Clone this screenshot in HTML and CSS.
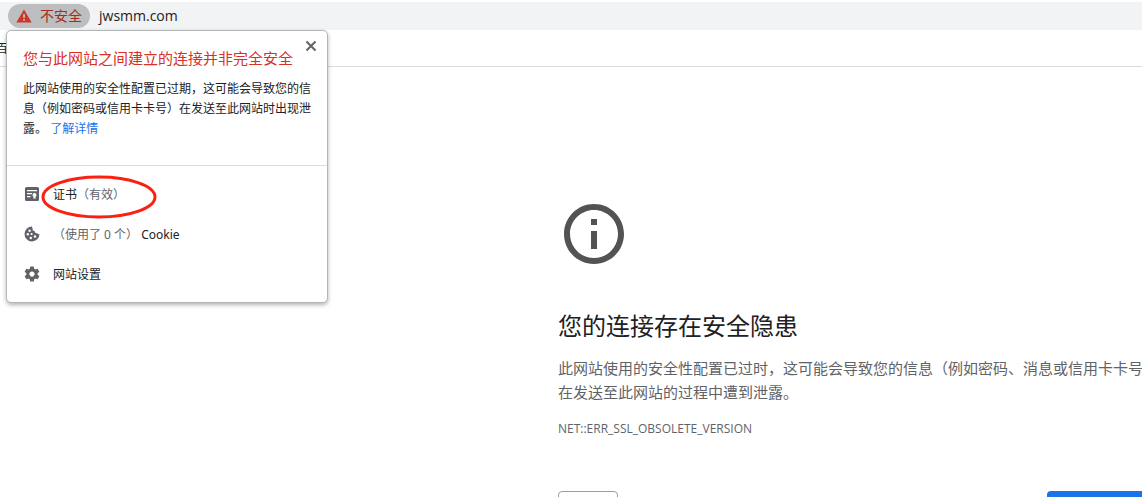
FILE: index.html
```html
<!DOCTYPE html>
<html lang="zh-CN">
<head>
    <meta charset="UTF-8">
    <meta name="viewport" content="width=device-width, initial-scale=1.0">
    <title>您的连接存在安全隐患</title>
    <link rel="stylesheet" href="styles.css">
</head>
<body>
    <header class="browser">
        <div class="address-bar">
            <button type="button" class="chip">
                <svg width="16" height="14" viewBox="0 0 16 14">
                    <path fill="#d0352b" d="M8 0.5 15.7 13.5H0.3z"/>
                    <path fill="#bdbebf" d="M7.2 5h1.7v4H7.2zM7.2 10h1.7v1.7H7.2z"/>
                </svg>
                <span>不安全</span>
            </button>
            <span class="url">jwsmm.com</span>
        </div>
        <nav class="bookmarks"><span class="bookmark">百</span></nav>
    </header>

    <section class="popup">
        <button type="button" class="close" aria-label="关闭">
            <svg width="12" height="12" viewBox="0 0 12 12">
                <path d="M1.5 1.5l9 9M10.5 1.5l-9 9" stroke="#5f6368" stroke-width="2"/>
            </svg>
        </button>
        <div class="popup-info">
            <h2>您与此网站之间建立的连接并非完全安全</h2>
            <p>此网站使用的安全性配置已过期，这可能会导致您的信息（例如密码或信用卡卡号）在发送至此网站时出现泄露。 <a href="#">了解详情</a></p>
        </div>
        <div class="popup-menu">
            <button type="button" class="item">
                <svg width="16" height="16" viewBox="0 0 16 16">
                    <path fill="#5f6368" d="M2.5 1h11A1.5 1.5 0 0 1 15 2.5v11a1.5 1.5 0 0 1-1.5 1.5h-11A1.5 1.5 0 0 1 1 13.5v-11A1.5 1.5 0 0 1 2.5 1z"/>
                    <path fill="#fff" d="M3 4h10v1.3H3zM3 7h5v1.3H3zM3 10h3.5v1.3H3z"/>
                    <circle cx="10.5" cy="9" r="2" fill="#fff"/>
                    <path fill="#fff" d="M9.5 9.5h2V13l-1-.8-1 .8z"/>
                </svg>
                <span>证书<span class="muted">（有效）</span></span>
            </button>
            <button type="button" class="item">
                <svg width="16" height="16" viewBox="0 0 16 16">
                    <path fill="#5f6368" d="M8 .5a7.5 7.5 0 1 0 7.5 7.6c-.8.3-1.9 0-2.3-.9-1.5.3-2.7-.7-2.5-2.2C9 5 8 3.5 8.7 2.2 8 1.8 7.8 1.2 8 .5z"/>
                    <g fill="#fff">
                        <circle cx="5.6" cy="4.7" r="1.2"/>
                        <circle cx="3.8" cy="8.3" r="1.2"/>
                        <circle cx="7.6" cy="8" r="1.1"/>
                        <circle cx="6.8" cy="12" r="1.2"/>
                        <circle cx="11" cy="10.5" r="1.2"/>
                    </g>
                </svg>
                <span><span class="muted">（使用了 0 个）</span> Cookie</span>
            </button>
            <button type="button" class="item">
                <svg width="18" height="18" viewBox="0 0 24 24">
                    <path fill="#5f6368" d="M19.43 12.98c.04-.32.07-.64.07-.98s-.03-.66-.07-.98l2.11-1.65c.19-.15.24-.42.12-.64l-2-3.46c-.12-.22-.39-.3-.61-.22l-2.49 1c-.52-.4-1.08-.73-1.69-.98l-.38-2.65C14.46 2.18 14.25 2 14 2h-4c-.25 0-.46.18-.49.42l-.38 2.65c-.61.25-1.17.59-1.69.98l-2.49-1c-.23-.09-.49 0-.61.22l-2 3.46c-.13.22-.07.49.12.64l2.11 1.65c-.04.32-.07.65-.07.98s.03.66.07.98l-2.11 1.65c-.19.15-.24.42-.12.64l2 3.46c.12.22.39.3.61.22l2.49-1c.52.4 1.08.73 1.69.98l.38 2.65c.03.24.24.42.49.42h4c.25 0 .46-.18.49-.42l.38-2.65c.61-.25 1.17-.59 1.69-.98l2.49 1c.23.09.49 0 .61-.22l2-3.46c.12-.22.07-.49-.12-.64l-2.11-1.65zM12 15.5c-1.93 0-3.5-1.57-3.5-3.5s1.57-3.5 3.5-3.5 3.5 1.57 3.5 3.5-1.57 3.5-3.5 3.5z"/>
                </svg>
                <span>网站设置</span>
            </button>
            <!-- red ring around the certificate row -->
            <svg class="ring" width="116" height="44" viewBox="0 0 116 44">
                <ellipse cx="58" cy="22" rx="56" ry="20" fill="none" stroke="#fb2010" stroke-width="3"/>
            </svg>
        </div>
    </section>

    <main class="page">
        <div class="content">
            <svg class="info-icon" width="72" height="72" viewBox="0 0 24 24">
                <path fill="#535353" d="M11 7h2v2h-2zm0 4h2v6h-2zm1-9C6.48 2 2 6.48 2 12s4.48 10 10 10 10-4.48 10-10S17.52 2 12 2zm0 18c-4.41 0-8-3.59-8-8s3.59-8 8-8 8 3.59 8 8-3.59 8-8 8z"/>
            </svg>
            <h1>您的连接存在安全隐患</h1>
            <p>此网站使用的安全性配置已过时，这可能会导致您的信息（例如密码、消息或信用卡卡号）在发送至此网站的过程中遭到泄露。</p>
            <div class="error-code">NET::ERR_SSL_OBSOLETE_VERSION</div>
            <div class="actions">
                <button type="button" class="details" aria-label="高级"></button>
                <button type="button" class="primary" aria-label="返回安全连接"></button>
            </div>
        </div>
    </main>
</body>
</html>
```

FILE: styles.css
```css
* {
    box-sizing: border-box;
}

body {
    margin: 0;
    height: 100vh;
    overflow: hidden;
    background-color: #fff;
    color: #202124;
    font-family: "Noto Sans", "Noto Sans CJK SC", sans-serif;
    font-size: 12px;
}

button {
    margin: 0;
    padding: 0;
    border: none;
    background: none;
    color: inherit;
    font: inherit;
    cursor: pointer;
}

h1,
h2,
p {
    margin: 0;
    font-weight: normal;
}

/* browser bars */
.browser {
    padding-top: 2px;
    border-bottom: 1px solid #dadce0;
}

.address-bar {
    display: flex;
    align-items: center;
    gap: 9px;
    height: 28px;
    padding-left: 8px;
    background-color: #f1f3f4;
}

.chip {
    display: flex;
    align-items: center;
    gap: 8px;
    height: 24px;
    padding: 0 8px;
    border-radius: 12px;
    background-color: #bdbebf;
    color: #a52a22;
    font-size: 14px;
}

.chip span,
.url {
    padding-bottom: 2px;
}

.url {
    font-family: "Open Sans", sans-serif;
    font-size: 14px;
}

.bookmarks {
    display: flex;
    align-items: center;
    height: 36px;
}

.bookmark {
    margin-left: -4px;
}

/* site info popup */
.popup {
    position: absolute;
    top: 30px;
    left: 6px;
    width: 322px;
    border: 1px solid #b4b6b8;
    border-radius: 5px;
    background-color: #fff;
    box-shadow: 0 2px 4px rgba(0, 0, 0, 0.3);
}

.close {
    position: absolute;
    top: 9px;
    right: 10px;
    width: 12px;
    height: 12px;
}

.close svg {
    display: block;
}

.popup-info {
    padding: 16px 14px 26px 16px;
    border-bottom: 1px solid #dadce0;
}

.popup-info h2 {
    margin-bottom: 10px;
    color: #d93025;
    font-size: 15px;
    line-height: 22px;
}

.popup-info p {
    line-height: 20px;
}

.popup-info a {
    color: #1a73e8;
    text-decoration: none;
}

.popup-menu {
    position: relative;
    padding: 8px 0;
}

.item {
    display: flex;
    align-items: center;
    gap: 12px;
    width: 100%;
    height: 40px;
    padding-left: 16px;
    text-align: left;
}

.item svg {
    width: 18px;
}

.muted {
    color: #5f6368;
}

.ring {
    position: absolute;
    top: 9px;
    left: 34px;
    pointer-events: none;
}

/* warning page */
.page {
    padding: 131px 0 0 558px;
    color: #5f6368;
}

.content {
    width: 600px;
}

.info-icon {
    display: block;
    margin-bottom: 40px;
}

.content h1 {
    margin-bottom: 14px;
    color: #202124;
    font-size: 24px;
    line-height: 32px;
}

.content p {
    font-size: 15px;
    line-height: 24px;
}

.error-code {
    margin-top: 15px;
    font-family: "Open Sans", sans-serif;
    font-size: 12px;
    line-height: 20px;
}

.actions {
    display: flex;
    justify-content: space-between;
    margin-top: 52px;
}

.actions button {
    height: 32px;
    border-radius: 4px;
}

.details {
    width: 60px;
    border: 1px solid #9aa0a6;
}

.primary {
    width: 111px;
    background-color: #1a73e8;
}
```
